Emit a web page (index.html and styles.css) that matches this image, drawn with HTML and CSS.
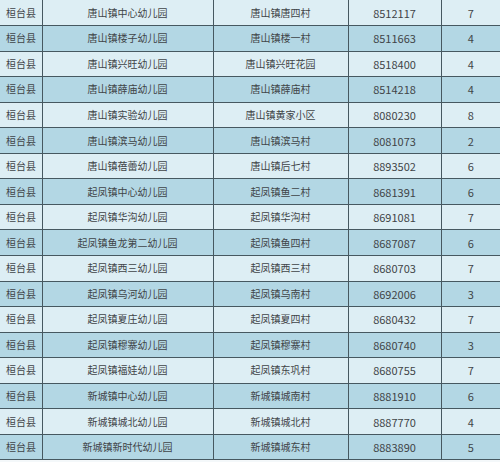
FILE: index.html
```html
<!DOCTYPE html>
<html lang="zh">
<head>
<meta charset="utf-8">
<link rel="stylesheet" href="styles.css">
</head>
<body>
<table class="list">
  <colgroup>
    <col class="c1"><col class="c2"><col class="c3"><col class="c4"><col class="c5">
  </colgroup>
  <tbody>
    <tr><td class="county">桓台县</td><td>唐山镇中心幼儿园</td><td>唐山镇唐四村</td><td class="num">8512117</td><td class="num">7</td></tr>
    <tr><td class="county">桓台县</td><td>唐山镇楼子幼儿园</td><td>唐山镇楼一村</td><td class="num">8511663</td><td class="num">4</td></tr>
    <tr><td class="county">桓台县</td><td>唐山镇兴旺幼儿园</td><td>唐山镇兴旺花园</td><td class="num">8518400</td><td class="num">4</td></tr>
    <tr><td class="county">桓台县</td><td>唐山镇薛庙幼儿园</td><td>唐山镇薛庙村</td><td class="num">8514218</td><td class="num">4</td></tr>
    <tr><td class="county">桓台县</td><td>唐山镇实验幼儿园</td><td>唐山镇黄家小区</td><td class="num">8080230</td><td class="num">8</td></tr>
    <tr><td class="county">桓台县</td><td>唐山镇滨马幼儿园</td><td>唐山镇滨马村</td><td class="num">8081073</td><td class="num">2</td></tr>
    <tr><td class="county">桓台县</td><td>唐山镇蓓蕾幼儿园</td><td>唐山镇后七村</td><td class="num">8893502</td><td class="num">6</td></tr>
    <tr><td class="county">桓台县</td><td>起凤镇中心幼儿园</td><td>起凤镇鱼二村</td><td class="num">8681391</td><td class="num">6</td></tr>
    <tr><td class="county">桓台县</td><td>起凤镇华沟幼儿园</td><td>起凤镇华沟村</td><td class="num">8691081</td><td class="num">7</td></tr>
    <tr><td class="county">桓台县</td><td>起凤镇鱼龙第二幼儿园</td><td>起凤镇鱼四村</td><td class="num">8687087</td><td class="num">6</td></tr>
    <tr><td class="county">桓台县</td><td>起凤镇西三幼儿园</td><td>起凤镇西三村</td><td class="num">8680703</td><td class="num">7</td></tr>
    <tr><td class="county">桓台县</td><td>起凤镇乌河幼儿园</td><td>起凤镇乌南村</td><td class="num">8692006</td><td class="num">3</td></tr>
    <tr><td class="county">桓台县</td><td>起凤镇夏庄幼儿园</td><td>起凤镇夏四村</td><td class="num">8680432</td><td class="num">7</td></tr>
    <tr><td class="county">桓台县</td><td>起凤镇穆寨幼儿园</td><td>起凤镇穆寨村</td><td class="num">8680740</td><td class="num">3</td></tr>
    <tr><td class="county">桓台县</td><td>起凤镇福娃幼儿园</td><td>起凤镇东巩村</td><td class="num">8680755</td><td class="num">7</td></tr>
    <tr><td class="county">桓台县</td><td>新城镇中心幼儿园</td><td>新城镇城南村</td><td class="num">8881910</td><td class="num">6</td></tr>
    <tr><td class="county">桓台县</td><td>新城镇城北幼儿园</td><td>新城镇城北村</td><td class="num">8887770</td><td class="num">4</td></tr>
    <tr><td class="county">桓台县</td><td>新城镇新时代幼儿园</td><td>新城镇城东村</td><td class="num">8883890</td><td class="num">5</td></tr>
  </tbody>
</table>
</body>
</html>
```

FILE: styles.css
```css
html, body {
  margin: 0;
  padding: 0;
  background: #f4f8fa;
}
body {
  width: 500px;
  height: 462px;
  overflow: hidden;
  font-family: "Noto Sans CJK SC", "Noto Sans", sans-serif;
  color: #3f4447;
}
.list {
  width: 500px;
  table-layout: fixed;
  border-collapse: collapse;
}
.c1 { width: 42px; }
.c2 { width: 171px; }
.c3 { width: 135px; }
.c4 { width: 93px; }
.c5 { width: 59px; }
.list tr {
  height: 25.55px;
}
.list tr:nth-child(odd) { background: #ddeef4; }
.list tr:nth-child(even) { background: #b3d7e4; }
.list td {
  padding: 0;
  text-align: center;
  vertical-align: middle;
  font-size: 10px;
  line-height: 12px;
  white-space: nowrap;
  border: 1px solid #465860;
}
.list tr:first-child td { border-top: none; }
.list td:first-child { border-left: none; }
.list td:last-child { border-right: none; }
.list td.county {
  text-align: left;
  padding-left: 6px;
}
.list td.num {
  font-size: 11px;
}
```
